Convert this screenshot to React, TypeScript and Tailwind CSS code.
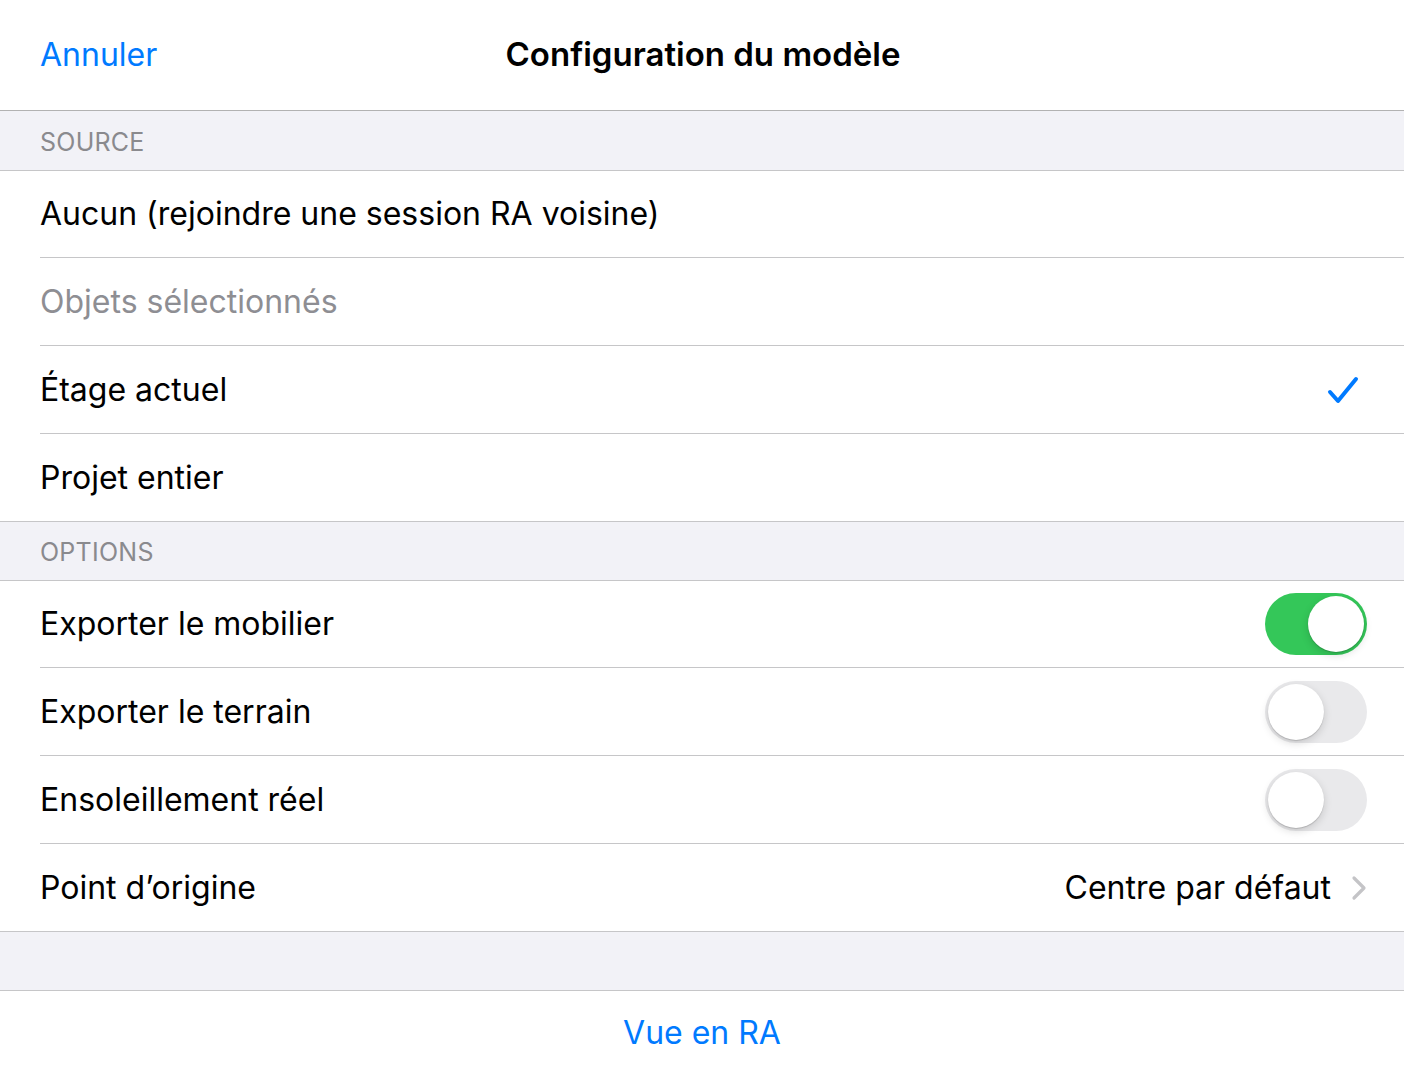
import React from 'react';

const font = { fontFamily: 'Inter, "Noto Sans", sans-serif' };

const Toggle: React.FC<{ on: boolean }> = ({ on }) => (
  <div
    className={`relative w-[102px] h-[62px] rounded-full ${on ? 'bg-[#34C759]' : 'bg-[#E9E9EB]'}`}
  >
    <div
      className={`absolute top-[3px] w-[56px] h-[56px] rounded-full bg-white shadow-[0_3px_8px_rgba(0,0,0,0.15),0_1px_1px_rgba(0,0,0,0.16)] ${on ? 'left-[43px]' : 'left-[3px]'}`}
    />
  </div>
);

const Row: React.FC<{ last?: boolean; first?: boolean; children: React.ReactNode }> = ({ last, first, children }) => (
  <div className={`pl-10 bg-white ${last ? 'border-b border-[#C6C6C8]' : ''}`}>
    <div
      className={`flex items-center justify-between pr-[37px] ${first ? 'h-[87px]' : last ? 'h-[87px]' : 'h-[88px]'} ${last ? '' : 'border-b border-[#C6C6C8]'}`}
    >
      {children}
    </div>
  </div>
);

const SectionHeader: React.FC<{ label: string; tall?: boolean }> = ({ label, tall }) => (
  <div
    className={`${tall ? 'h-[60px]' : 'h-[59px]'} bg-[#F2F2F7] border-b border-[#C6C6C8] flex items-center pl-10 pt-1`}
  >
    <span className="text-[25px] text-[#8A8A8E] tracking-[0.01em]">{label}</span>
  </div>
);

const Label: React.FC<{ children: React.ReactNode; muted?: boolean }> = ({ children, muted }) => (
  <span className={`text-[32px] ${muted ? 'text-[#8E8E93]' : ''}`}>{children}</span>
);

export default function App() {
  return (
    <div className="w-[1404px] h-[1074px] bg-white flex flex-col text-black" style={font}>
      <div className="h-[111px] border-b border-[#B2B2B2] relative flex items-center justify-center">
        <span className="absolute left-10 top-[31px] text-[32px] text-[#007AFF]">Annuler</span>
        <span className="text-[33px] font-semibold -mt-[1px] ml-[2px]">Configuration du modèle</span>
      </div>

      <SectionHeader label="SOURCE" tall />
      <Row first>
        <Label>Aucun (rejoindre une session RA voisine)</Label>
      </Row>
      <Row>
        <Label muted>Objets sélectionnés</Label>
      </Row>
      <Row>
        <Label>Étage actuel</Label>
        <svg width="36" height="32" viewBox="0 0 36 32" className="mr-[5px] mt-[2px]">
          <path
            d="M4 17 L12 26 L30 4"
            fill="none"
            stroke="#007AFF"
            strokeWidth="4"
            strokeLinecap="round"
            strokeLinejoin="round"
          />
        </svg>
      </Row>
      <Row last>
        <Label>Projet entier</Label>
      </Row>

      <SectionHeader label="OPTIONS" />
      <Row first>
        <Label>Exporter le mobilier</Label>
        <Toggle on />
      </Row>
      <Row>
        <Label>Exporter le terrain</Label>
        <Toggle on={false} />
      </Row>
      <Row>
        <Label>Ensoleillement réel</Label>
        <Toggle on={false} />
      </Row>
      <Row last>
        <Label>Point d’origine</Label>
        <div className="flex items-center gap-[20px]">
          <Label>Centre par défaut</Label>
          <svg width="16" height="26" viewBox="0 0 16 26">
            <path
              d="M3 3 L13 13 L3 23"
              fill="none"
              stroke="#C4C4C7"
              strokeWidth="3.2"
              strokeLinecap="round"
              strokeLinejoin="round"
            />
          </svg>
        </div>
      </Row>

      <div className="h-[59px] bg-[#F2F2F7] border-b border-[#C6C6C8]" />
      <div className="flex-1 flex items-center justify-center">
        <span className="text-[32px] text-[#007AFF]">Vue en RA</span>
      </div>
    </div>
  );
}
